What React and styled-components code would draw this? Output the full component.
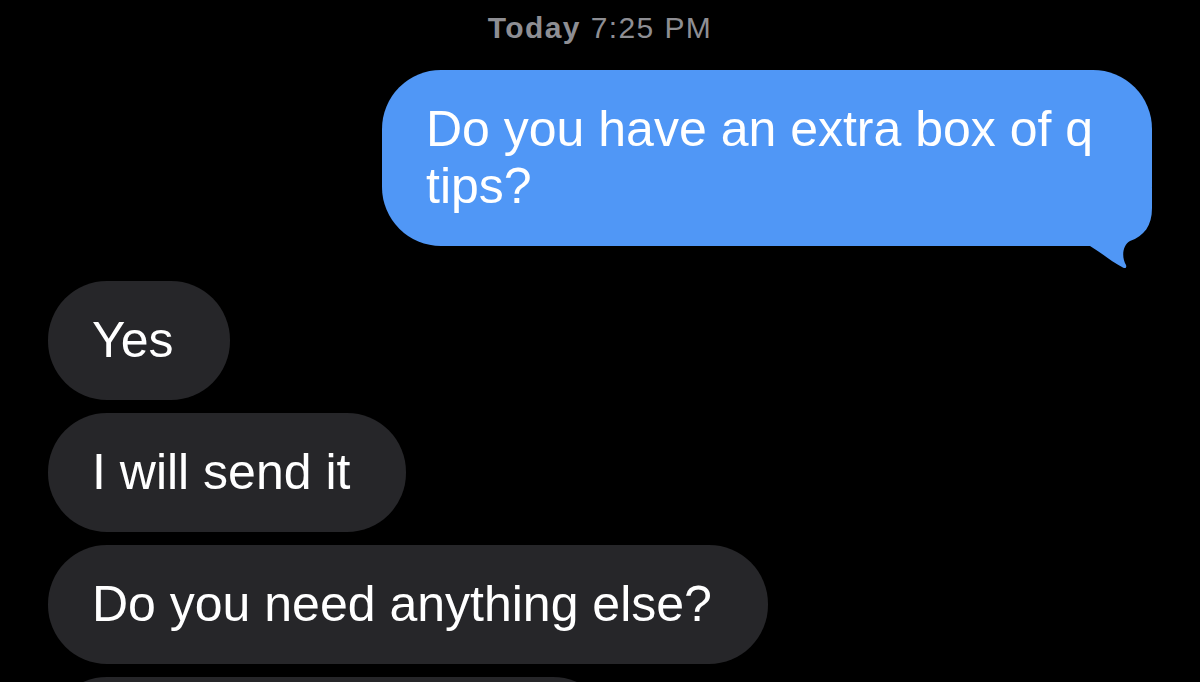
import { createGlobalStyle, styled } from "styled-components";

const GlobalStyle = createGlobalStyle`
  html,
  body {
    margin: 0;
    background: #000;
    overflow: hidden;
  }
  body {
    font-family: "Liberation Sans", Arial, sans-serif;
  }
`;

const Thread = styled.main`
  display: flex;
  flex-direction: column;
  padding: 10px 48px 0;
  height: 682px;
  box-sizing: border-box;
  overflow: hidden;
`;

const Stamp = styled.div`
  text-align: center;
  font-size: 30px;
  line-height: 36px;
  letter-spacing: 1.4px;
  color: #8e8e93;
  margin-bottom: 24px;

  b {
    font-weight: 600;
  }
`;

const Row = styled.div`
  display: flex;
  flex-shrink: 0;
  justify-content: ${(p) => (p.$mine ? "flex-end" : "flex-start")};
  margin-bottom: ${(p) => p.$gap}px;
`;

const Bubble = styled.div`
  position: relative;
  box-sizing: border-box;
  max-width: 770px;
  padding: 31px 56px 31px 44px;
  border-radius: 59px;
  font-size: 50px;
  line-height: 57px;
  color: #fff;
  background: ${(p) => (p.$mine ? "#5097f6" : "#262629")};
  ${(p) => p.$w && `width: ${p.$w}px;`}
`;

const Tail = styled.svg`
  position: absolute;
  right: 0;
  bottom: -22px;
  width: 62px;
  height: 80px;
`;

const Outgoing = ({ children }) => (
  <Row $mine $gap={35}>
    <Bubble $mine>
      {children}
      <Tail viewBox="0 0 62 80" aria-hidden>
        <path
          d="M0 0H62V20C62 38 54 48 40 53C33 57 31 68 36 77C37 80 35 81 32 79C22 74 12 65 0 58Z"
          fill="#5097f6"
        />
      </Tail>
    </Bubble>
  </Row>
);

export default function App() {
  return (
    <>
      <GlobalStyle />
      <Thread>
        <Stamp>
          <b>Today</b> 7:25 PM
        </Stamp>
        <Outgoing>Do you have an extra box of q tips?</Outgoing>
        <Row $gap={13}>
          <Bubble>Yes</Bubble>
        </Row>
        <Row $gap={13}>
          <Bubble>I will send it</Bubble>
        </Row>
        <Row $gap={13}>
          <Bubble>Do you need anything else?</Bubble>
        </Row>
        <Row $gap={13}>
          <Bubble $w={564} aria-hidden>
            &nbsp;
          </Bubble>
        </Row>
      </Thread>
    </>
  );
}
